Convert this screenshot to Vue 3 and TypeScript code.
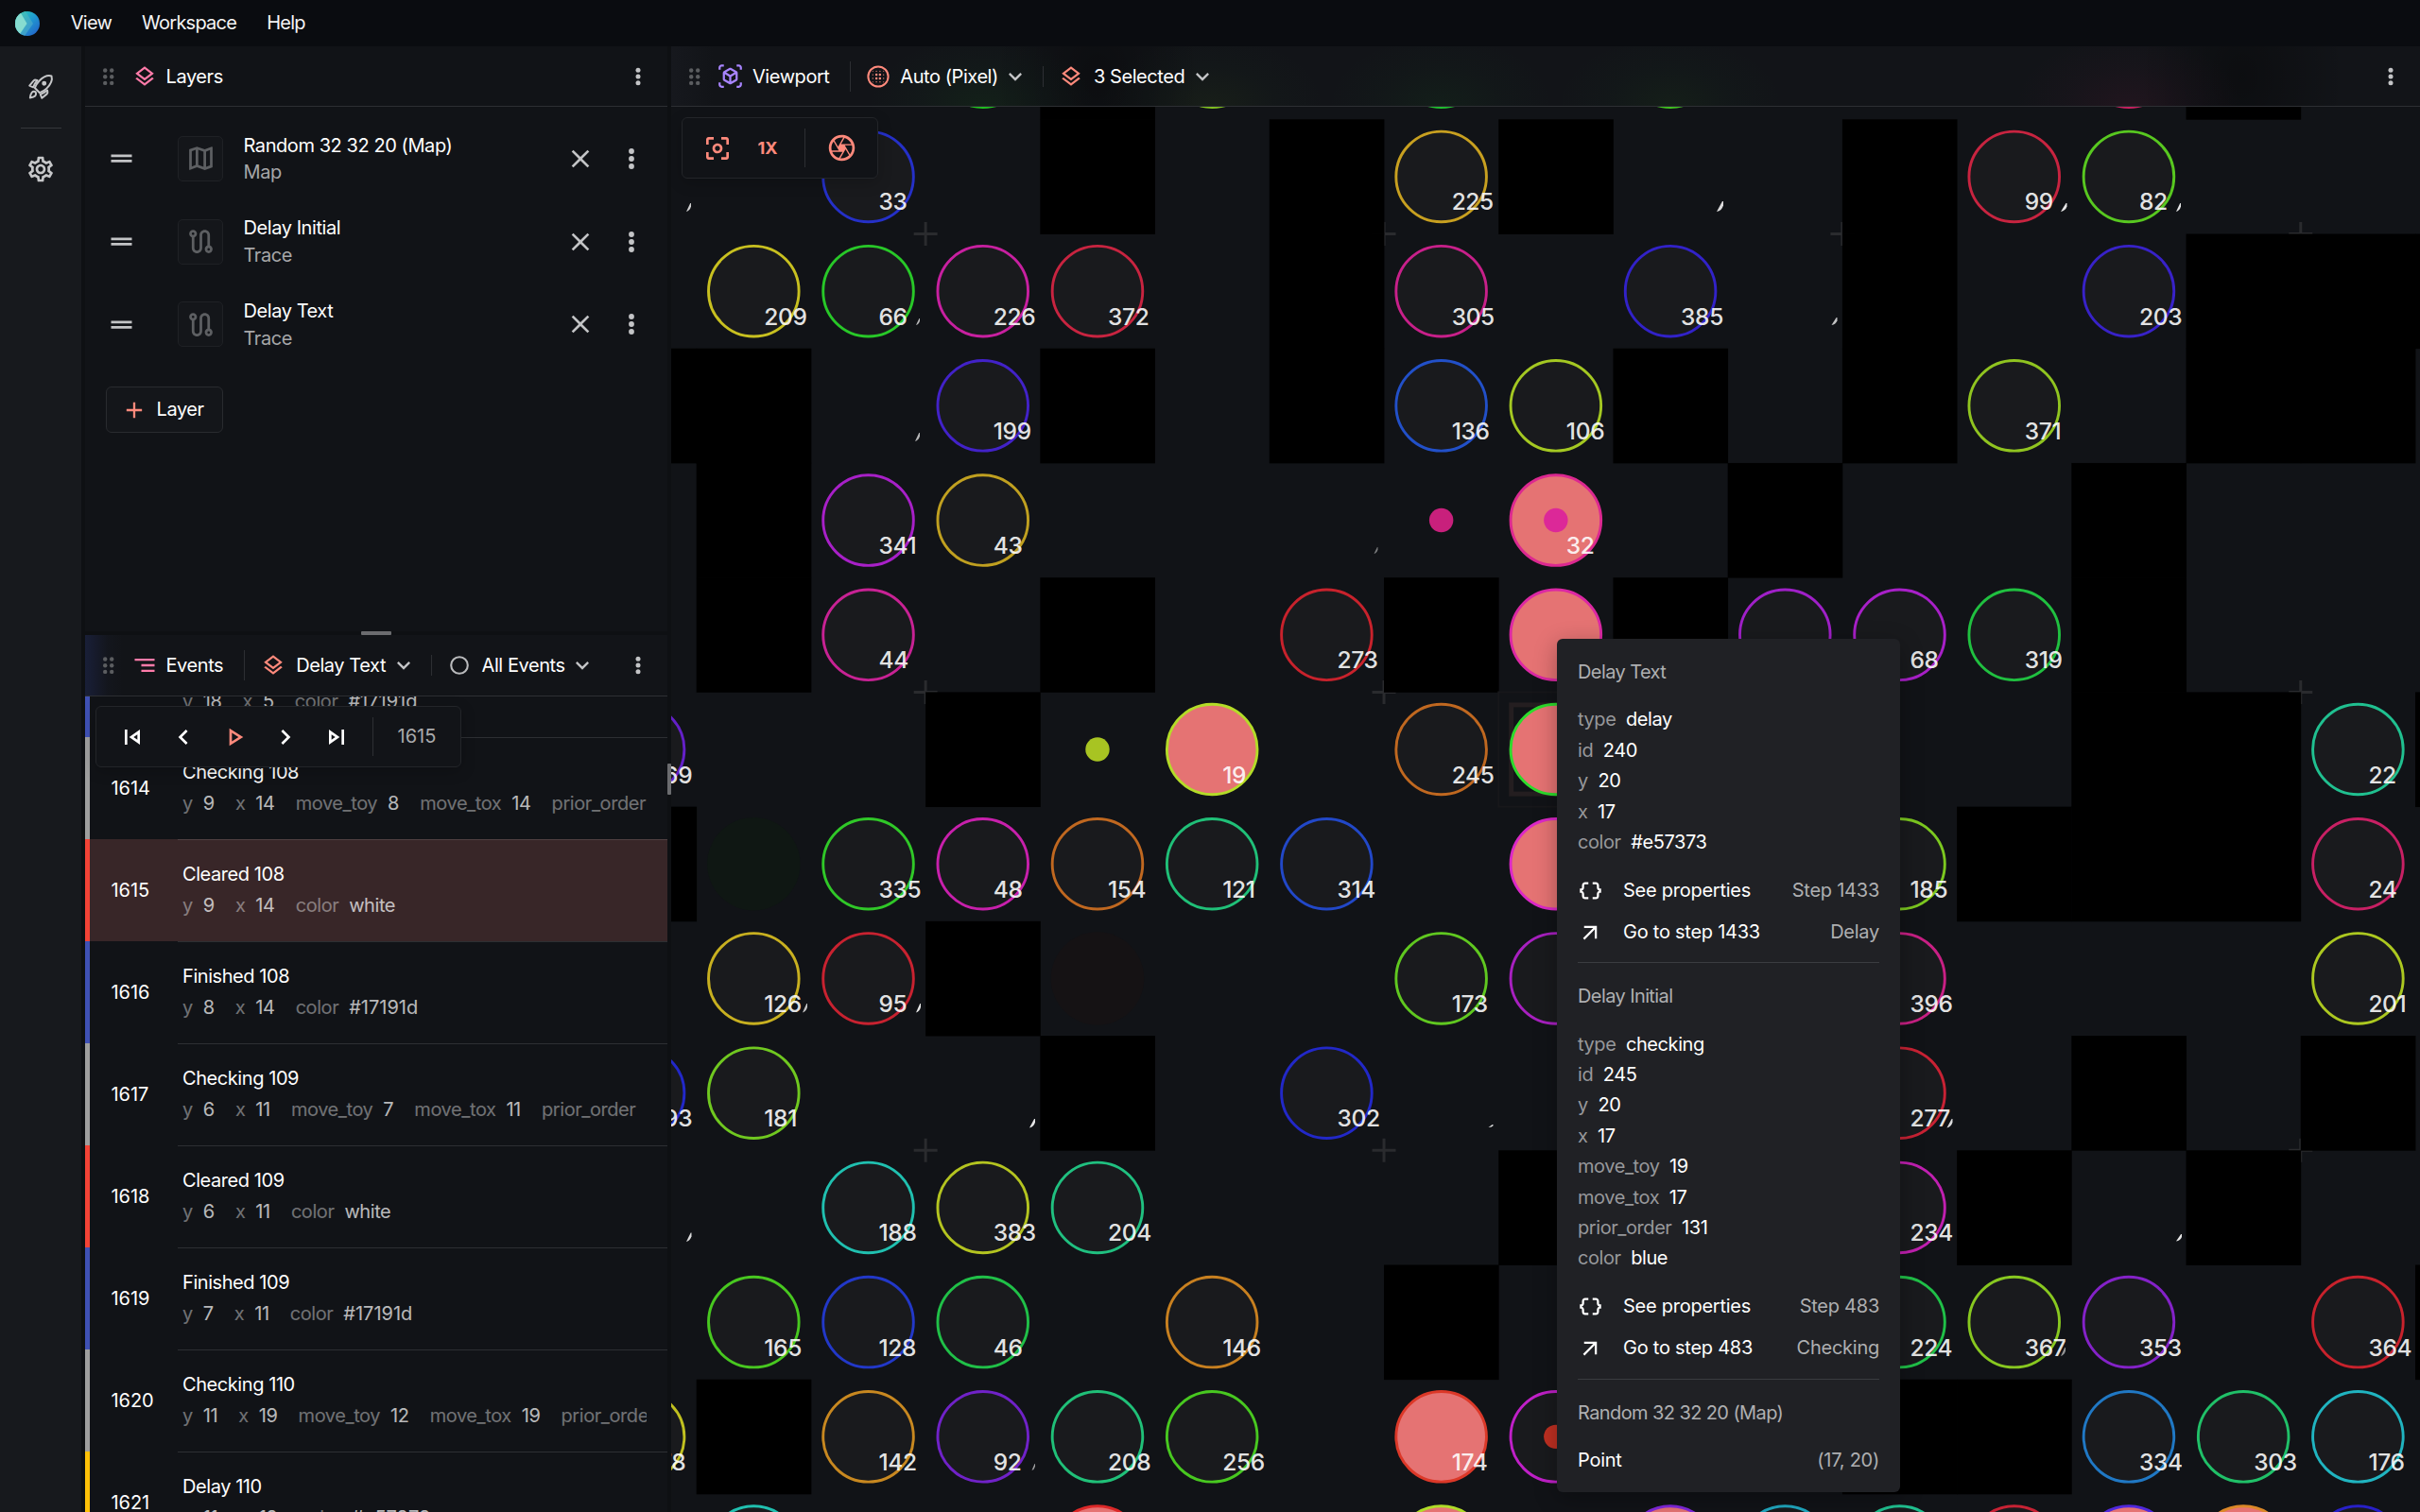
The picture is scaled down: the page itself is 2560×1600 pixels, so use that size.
<script setup lang="ts">
import { defineComponent, h } from 'vue'

const icons: Record<string, string> = {
  layers: 'M11.99 18.54l-7.37-5.73L3 14.07l9 7 9-7-1.63-1.27-7.38 5.74zM12 16l7.36-5.73L21 9l-9-7-9 7 1.63 1.27L12 16zm0-11.47L17.74 9 12 13.47 6.26 9 12 4.53z',
  gear: 'M19.43 12.98c.04-.32.07-.64.07-.98 0-.34-.03-.66-.07-.98l2.11-1.65c.19-.15.24-.42.12-.64l-2-3.46c-.09-.16-.26-.25-.44-.25-.06 0-.12.01-.17.03l-2.49 1c-.52-.4-1.08-.73-1.69-.98l-.38-2.65C14.46 2.18 14.25 2 14 2h-4c-.25 0-.46.18-.49.42l-.38 2.65c-.61.25-1.17.59-1.69.98l-2.49-1c-.06-.02-.12-.03-.18-.03-.17 0-.34.09-.43.25l-2 3.46c-.13.22-.07.49.12.64l2.11 1.65c-.04.32-.07.65-.07.98 0 .33.03.66.07.98l-2.11 1.65c-.19.15-.24.42-.12.64l2 3.46c.09.16.26.25.44.25.06 0 .12-.01.17-.03l2.49-1c.52.4 1.08.73 1.69.98l.38 2.65c.03.24.24.42.49.42h4c.25 0 .46-.18.49-.42l.38-2.65c.61-.25 1.17-.59 1.69-.98l2.49 1c.06.02.12.03.18.03.17 0 .34-.09.43-.25l2-3.46c.12-.22.07-.49-.12-.64l-2.11-1.65zm-1.98-1.71c.04.31.05.52.05.73 0 .21-.02.43-.05.73l-.14 1.13.89.7 1.08.84-.7 1.21-1.27-.51-1.04-.42-.9.68c-.43.32-.84.56-1.25.73l-1.06.43-.16 1.13-.2 1.35h-1.4l-.19-1.35-.16-1.13-1.06-.43c-.43-.18-.83-.41-1.23-.71l-.91-.7-1.06.43-1.27.51-.7-1.21 1.08-.84.89-.7-.14-1.13c-.03-.31-.05-.54-.05-.74s.02-.43.05-.73l.14-1.13-.89-.7-1.08-.84.7-1.21 1.27.51 1.04.42.9-.68c.43-.32.84-.56 1.25-.73l1.06-.43.16-1.13.2-1.35h1.39l.19 1.35.16 1.13 1.06.43c.43.18.83.41 1.23.71l.91.7 1.06-.43 1.27-.51.7 1.21-1.07.85-.89.7.14 1.13zM12 8c-2.21 0-4 1.79-4 4s1.79 4 4 4 4-1.79 4-4-1.79-4-4-4zm0 6c-1.1 0-2-.9-2-2s.9-2 2-2 2 .9 2 2-.9 2-2 2z',
  map: 'M20.5 3l-.16.03L15 5.1 9 3 3.36 4.9c-.21.07-.36.25-.36.48V20.5c0 .28.22.5.5.5l.16-.03L9 18.9l6 2.1 5.64-1.9c.21-.07.36-.25.36-.48V3.5c0-.28-.22-.5-.5-.5zM10 5.47l4 1.4v11.66l-4-1.4V5.47zm-5 .99l3-1.01v11.7l-3 1.16V6.46zm14 11.08l-3 1.01V6.86l3-1.16v11.84z',
  route: 'M19 15.18V7c0-2.21-1.79-4-4-4s-4 1.79-4 4v10c0 1.1-.9 2-2 2s-2-.9-2-2V8.82C8.16 8.4 9 7.3 9 6c0-1.66-1.34-3-3-3S3 4.34 3 6c0 1.3.84 2.4 2 2.82V17c0 2.21 1.79 4 4 4s4-1.79 4-4V7c0-1.1.9-2 2-2s2 .9 2 2v8.18c-1.16.41-2 1.51-2 2.82 0 1.66 1.34 3 3 3s3-1.34 3-3c0-1.3-.84-2.4-2-2.82zM6 7c-.55 0-1-.45-1-1s.45-1 1-1 1 .45 1 1-.45 1-1 1zm12 12c-.55 0-1-.45-1-1s.45-1 1-1 1 .45 1 1-.45 1-1 1z',
  close: 'M19 6.41L17.59 5 12 10.59 6.41 5 5 6.41 10.59 12 5 17.59 6.41 19 12 13.41 17.59 19 19 17.59 13.41 12z',
  handle: 'M20 9H4v2h16V9zM4 15h16v-2H4v2z',
  add: 'M19 13h-6v6h-2v-6H5v-2h6V5h2v6h6v2z',
  segment: 'M9 18h12v-2H9v2zM3 6v2h18V6H3zm6 7h12v-2H9v2z',
  expand: 'M16.59 8.59L12 13.17 7.41 8.59 6 10l6 6 6-6z',
  first: 'M6 6h2v12H6zm3.5 6l8.5 6V6l-8.5 6zm6.5 2.14L12.97 12 16 9.86v4.28z',
  prev: 'M15.41 7.41L14 6l-6 6 6 6 1.41-1.41L10.83 12z',
  play: 'M10 8.64L15.27 12 10 15.36V8.64M8 5v14l11-7L8 5z',
  next: 'M10 6L8.59 7.41 13.17 12l-4.58 4.59L10 18l6-6z',
  last: 'M6 18l8.5-6L6 6v12zm2-8.14L11.03 12 8 14.14V9.86zM16 6h2v12h-2z',
  cube: 'M3 4c0-.55.45-1 1-1h2V1H4C2.34 1 1 2.34 1 4v2h2V4zM3 20v-2H1v2c0 1.66 1.34 3 3 3h2v-2H4c-.55 0-1-.45-1-1zM20 1h-2v2h2c.55 0 1 .45 1 1v2h2V4c0-1.66-1.34-3-3-3zM21 20c0 .55-.45 1-1 1h-2v2h2c1.66 0 3-1.34 3-3v-2h-2v2zM19 14.87V9.13c0-.72-.38-1.38-1-1.73l-5-2.88c-.31-.18-.65-.27-1-.27s-.69.09-1 .27L6 7.39c-.62.36-1 1.02-1 1.74v5.74c0 .72.38 1.38 1 1.73l5 2.88c.31.18.65.27 1 .27s.69-.09 1-.27l5-2.88c.62-.35 1-1.01 1-1.73zm-8 2.3l-4-2.3v-4.63l4 2.33v4.6zm1-6.33L8.04 8.53 12 6.25l3.96 2.28L12 10.84zm5 4.03l-4 2.3v-4.6l4-2.33v4.63z',
  focus: 'M12 8c-2.21 0-4 1.79-4 4s1.79 4 4 4 4-1.79 4-4-1.79-4-4-4zm0 6c-1.1 0-2-.9-2-2s.9-2 2-2 2 .9 2 2-.9 2-2 2zM5 15H3v4c0 1.1.9 2 2 2h4v-2H5v-4zM5 5h4V3H5c-1.1 0-2 .9-2 2v4h2V5zM19 3h-4v2h4v4h2V5c0-1.1-.9-2-2-2zM19 19h-4v2h4c1.1 0 2-.9 2-2v-4h-2v4z',
  camera: 'M14.25 2.26l-.08-.04-.01.02C13.46 2.09 12.74 2 12 2 6.48 2 2 6.48 2 12s4.48 10 10 10 10-4.48 10-10c0-4.75-3.31-8.72-7.75-9.74zM19.41 9h-7.99l2.71-4.7c2.4.66 4.35 2.42 5.28 4.7zM13.1 4.08L10.27 9l-1.15 2L6.4 6.3C7.84 4.88 9.82 4 12 4c.37 0 .74.03 1.1.08zM5.7 7.09L8.54 12l1.15 2H4.26C4.1 13.36 4 12.69 4 12c0-1.85.64-3.55 1.7-4.91zM4.59 15h7.98l-2.71 4.7c-2.4-.67-4.34-2.42-5.27-4.7zm6.31 4.91L14.89 13l2.72 4.7C16.16 19.12 14.18 20 12 20c-.38 0-.74-.04-1.1-.09zm7.4-3l-4-6.91h5.43c.17.64.27 1.31.27 2 0 1.85-.64 3.55-1.7 4.91z',
  braces: 'M4 7v2c0 .55-.45 1-1 1H2v4h1c.55 0 1 .45 1 1v2c0 1.65 1.35 3 3 3h3v-2H7c-.55 0-1-.45-1-1v-2c0-1.3-.84-2.42-2-2.83v-.34C5.16 11.42 6 10.3 6 9V7c0-.55.45-1 1-1h3V4H7C5.35 4 4 5.35 4 7zM21 10c-.55 0-1-.45-1-1V7c0-1.65-1.35-3-3-3h-3v2h3c.55 0 1 .45 1 1v2c0 1.3.84 2.42 2 2.83v.34c-1.16.41-2 1.52-2 2.83v2c0 .55-.45 1-1 1h-3v2h3c1.65 0 3-1.35 3-3v-2c0-.55.45-1 1-1h1v-4h-1z',
  outward: 'M6 6v2h8.59L5 17.59 6.41 19 16 9.41V18h2V6z',
}

// Renders a 24-unit glyph at the requested pixel size.
const Icon = defineComponent({
  props: { name: { type: String, required: true }, size: { type: Number, default: 28 } },
  setup(props) {
    return () =>
      h('svg', { viewBox: '0 0 24 24', width: props.size, height: props.size, style: 'display:block;flex:none' }, [
        h('path', { d: icons[props.name], fill: 'currentColor' }),
      ])
  },
})

// Vertical three-dot menu button.
const Kebab = defineComponent({
  props: { r: { type: Number, default: 2.5 }, gap: { type: Number, default: 6.7 } },
  setup(props) {
    return () =>
      h(
        'svg',
        { viewBox: '0 0 28 28', width: 28, height: 28, style: 'display:block;flex:none' },
        [-1, 0, 1].map((k) => h('circle', { cx: 14, cy: 14 + k * props.gap, r: props.r, fill: '#c3c4c6' })),
      )
  },
})

// Six-dot grip at the left of every panel header.
const Grip = defineComponent({
  setup() {
    return () =>
      h(
        'svg',
        { viewBox: '0 0 12 20', width: 12, height: 20, style: 'display:block;flex:none' },
        [0, 1, 2, 3, 4, 5].map((k) =>
          h('circle', { cx: 2.2 + (k % 2) * 7, cy: 3.5 + Math.floor(k / 2) * 6.7, r: 2.2, fill: '#5b5d60' }),
        ),
      )
  },
})

const layers = [
  { name: 'Random 32 32 20 (Map)', kind: 'Map', icon: 'map' },
  { name: 'Delay Initial', kind: 'Trace', icon: 'route' },
  { name: 'Delay Text', kind: 'Trace', icon: 'route' },
]

type Prop = [string, string]
interface EventRow { step?: number; title?: string; color: string; props: Prop[]; active?: boolean }
const BLUE = '#3f51b5', GREY = '#9e9e9e', RED = '#f44336', AMBER = '#ffc107'
const events: EventRow[] = [
  { color: BLUE, props: [['y', '18'], ['x', '5'], ['color', '#17191d']] },
  { step: 1614, title: 'Checking 108', color: GREY, props: [['y', '9'], ['x', '14'], ['move_toy', '8'], ['move_tox', '14'], ['prior_order', '']] },
  { step: 1615, title: 'Cleared 108', color: RED, active: true, props: [['y', '9'], ['x', '14'], ['color', 'white']] },
  { step: 1616, title: 'Finished 108', color: BLUE, props: [['y', '8'], ['x', '14'], ['color', '#17191d']] },
  { step: 1617, title: 'Checking 109', color: GREY, props: [['y', '6'], ['x', '11'], ['move_toy', '7'], ['move_tox', '11'], ['prior_order', '']] },
  { step: 1618, title: 'Cleared 109', color: RED, props: [['y', '6'], ['x', '11'], ['color', 'white']] },
  { step: 1619, title: 'Finished 109', color: BLUE, props: [['y', '7'], ['x', '11'], ['color', '#17191d']] },
  { step: 1620, title: 'Checking 110', color: GREY, props: [['y', '11'], ['x', '19'], ['move_toy', '12'], ['move_tox', '19'], ['prior_order', '']] },
  { step: 1621, title: 'Delay 110', color: AMBER, props: [['y', '11'], ['x', '19'], ['color', '#e57373']] },
]

// Map canvas: square cells of CELL px whose (0, 0) corner is at (X0, Y0) inside the viewport.
const CELL = 121.22, X0 = 26.7, Y0 = 77.3
const left = (c: number) => X0 + c * CELL
const top = (r: number) => Y0 + r * CELL
const cx = (c: number) => left(c) + CELL / 2
const cy = (r: number) => top(r) + CELL / 2

const walls: Record<number, number[]> = {
  [-1]: [3, 13],
  0: [3, 5, 7, 10],
  1: [5, 10, 13, 14, 15],
  2: [-1, 0, 3, 5, 8, 10, 13, 14],
  3: [0, 9, 12],
  4: [0, 3, 6, 8, 12],
  5: [2, 12, 13, 15],
  6: [-1, 11, 12, 13],
  7: [2],
  8: [3, 12, 14],
  9: [7, 11, 13],
  10: [6, 15],
  11: [0, 10, 11],
}
const wallCells = Object.entries(walls).flatMap(([r, cs]) => cs.map((c) => ({ r: +r, c })))
const crosses = [2, 6, 10, 14].flatMap((c) => [1, 5, 9].map((r) => ({ c, r })))

type Node = [number, number, string, string, boolean?]
const nodes: Node[] = [
  [2, -1, '', '#20c020'], [4, -1, '', '#80c020'], [6, -1, '', '#20c030'], [8, -1, '', '#40c020'], [12, -1, '', '#c82060'],
  [1, 0, '33', '#2530c8'], [6, 0, '225', '#c8a020'], [11, 0, '99', '#c82440'], [12, 0, '82', '#58c820'],
  [0, 1, '209', '#c8c020'], [1, 1, '66', '#28c828'], [2, 1, '226', '#c820a0'], [3, 1, '372', '#c82440'], [6, 1, '305', '#c8208a'], [8, 1, '385', '#3222c8'], [12, 1, '203', '#3822c8'],
  [2, 2, '199', '#4222c8'], [6, 2, '136', '#2250c8'], [7, 2, '106', '#a4c822'], [11, 2, '371', '#90c420'],
  [1, 3, '341', '#a820c8'], [2, 3, '43', '#c0a020'], [7, 3, '32', '#dc2890', true],
  [1, 4, '44', '#c82294'], [5, 4, '273', '#c8222c'], [7, 4, '', '#dc28a4', true], [9, 4, '', '#a020c8'], [10, 4, '68', '#a820c8'], [11, 4, '319', '#20c040'],
  [-1, 5, '369', '#6420c8'], [4, 5, '19', '#b4dc28', true], [6, 5, '245', '#c06820'], [7, 5, '', '#2cdc2c', true], [14, 5, '22', '#20c090'],
  [1, 6, '335', '#30c828'], [2, 6, '48', '#c820ac'], [3, 6, '154', '#c06820'], [4, 6, '121', '#20c078'], [5, 6, '314', '#2248c8'], [7, 6, '', '#dc28c8', true], [10, 6, '185', '#7cc820'], [14, 6, '24', '#c82064'],
  [0, 7, '126', '#c8b020'], [1, 7, '95', '#c82230'], [6, 7, '173', '#60c820'], [7, 7, '', '#a820c0'], [10, 7, '396', '#c82084'], [14, 7, '201', '#acc820'],
  [-1, 8, '393', '#2228c8'], [0, 8, '181', '#70c820'], [5, 8, '302', '#2228c8'], [10, 8, '277', '#c82234'],
  [1, 9, '188', '#20c0b0'], [2, 9, '383', '#b4c420'], [3, 9, '204', '#20c080'], [10, 9, '234', '#c020b0'],
  [0, 10, '165', '#48c820'], [1, 10, '128', '#2238c8'], [2, 10, '46', '#20c048'], [4, 10, '146', '#c88020'], [10, 10, '224', '#20c048'], [11, 10, '367', '#88c820'], [12, 10, '353', '#8422c8'], [14, 10, '364', '#c8222c'],
  [-1, 11, '178', '#c0c020'], [1, 11, '142', '#c88820'], [2, 11, '92', '#7022c8'], [3, 11, '208', '#20c078'], [4, 11, '256', '#48c820'], [6, 11, '174', '#dc3828', true], [7, 11, '', '#c020c8'], [12, 11, '334', '#2078c4'], [13, 11, '303', '#20c068'], [14, 11, '176', '#20b4c0'],
  [0, 12, '', '#20c0b0'], [3, 12, '', '#dc2828', true], [6, 12, '', '#b0dc28', true], [8, 12, '', '#8028dc', true], [9, 12, '', '#20a8c0'], [10, 12, '', '#20c090'], [11, 12, '', '#c82234'], [12, 12, '', '#5028dc', true], [13, 12, '', '#dc8828', true], [14, 12, '', '#2820c8'],
]
const dots: [number, number, string][] = [
  [6, 3, '#c8207c'], [7, 3, '#dc2898'], [3, 5, '#a8c422'], [7, 11, '#c03022'],
]
const ghosts: [number, number, string][] = [[0, 6, '#0f1713'], [3, 7, '#151214']]

// Remainders of labels hidden beneath neighbouring tiles: x, y, width, height, opacity.
const ticks: [number, number, number, number, number][] = [
  [726, 215, 5, 9, 0.8], [969, 337, 4, 7, 0.7], [1816, 213, 7, 11, 0.85], [1937.5, 336, 6, 8, 0.75],
  [2180, 215, 6.5, 9, 0.9], [2302, 215, 5, 9, 0.9], [968, 458, 5, 9, 0.7], [1453.5, 579, 4, 7, 0.45],
  [849, 1062, 5, 9.5, 0.75], [969, 1062, 5, 9.5, 0.9], [1089, 1184, 6, 9.5, 0.9], [726, 1304.5, 5.5, 9.5, 0.85],
  [1091.5, 1549, 3.5, 7, 0.6], [1574.5, 1190, 5, 3, 0.9], [2059.5, 1184, 6, 9.5, 0.85], [2302, 1306, 6, 7.5, 0.9],
  [2180, 1426, 5, 9, 0.55],
]
const tickPath = ([x, y, w, k]: number[]) => {
  const l = x - 710, t = y - 49
  return `M${l} ${t + k}L${l + w * 0.85} ${t}H${l + w}V${t + k * 0.4}Q${l + w * 0.75} ${t + k * 0.9} ${l} ${t + k}Z`
}

const tips = [
  { title: 'Delay Text', props: [['type', 'delay'], ['id', '240'], ['y', '20'], ['x', '17'], ['color', '#e57373']], step: 1433, kind: 'Delay' },
  {
    title: 'Delay Initial',
    props: [['type', 'checking'], ['id', '245'], ['y', '20'], ['x', '17'], ['move_toy', '19'], ['move_tox', '17'], ['prior_order', '131'], ['color', 'blue']],
    step: 483, kind: 'Checking',
  },
]
const blurDots = [-1, 0, 1, 2].flatMap((i) => [-1, 0, 1, 2].map((j) => {
  const edge = i === -1 || i === 2 || j === -1 || j === 2
  const corner = (i === -1 || i === 2) && (j === -1 || j === 2)
  return { x: 11.1 + i * 3.8, y: 11.1 + j * 3.8, r: corner ? 0.5 : edge ? 0.65 : 1.25 }
}))
</script>

<template>
  <div class="app">
    <nav class="menubar">
      <svg class="logo" viewBox="0 0 26 26" width="26" height="26">
        <defs>
          <linearGradient id="lg" x1="0" y1="0" x2="1" y2="1">
            <stop offset="0" stop-color="#2fd3b0" /><stop offset=".5" stop-color="#1f9ad0" /><stop offset="1" stop-color="#2458c8" />
          </linearGradient>
          <linearGradient id="lg2" x1="0" y1="0" x2="1" y2="1">
            <stop offset="0" stop-color="#3fcdb0" /><stop offset="1" stop-color="#3d8fd6" />
          </linearGradient>
          <clipPath id="lc"><circle cx="13" cy="13" r="13" /></clipPath>
        </defs>
        <g clip-path="url(#lc)">
          <rect width="26" height="26" fill="url(#lg)" />
          <path d="M0 0H11L19 13L10 26H0Z" fill="url(#lg2)" />
          <path d="M0 0H5L12.500 13L5 24H0Z" fill="#86dcd0" />
        </g>
      </svg>
      <span>View</span><span>Workspace</span><span>Help</span>
    </nav>

    <div class="body">
      <aside class="rail">
        <svg viewBox="0 0 24 24" width="32" height="32">
          <g transform="translate(12 12) scale(.93) translate(-12 -12)" fill="none" stroke="currentColor" stroke-width="1.600" stroke-linejoin="round">
            <path d="M9.190 6.350C7.150 8.640 5.750 11.930 5.620 12.240L2.500 10.900L6.050 6.640C6.520 6.170 7.200 5.960 7.860 6.090Z" />
            <path d="M11.170 17s3.740-1.550 5.890-3.700c5.400-5.400 4.500-9.620 4.210-10.570-.95-.3-5.170-1.190-10.570 4.210C8.550 9.090 7 12.830 7 12.830Z" />
            <path d="M17.650 14.810c-2.290 2.040-5.580 3.440-5.890 3.570L13.100 21.500l4.260-3.550c.47-.47.68-1.150.55-1.810Z" />
            <path d="M8 17.800c0 .83-.2 1.300-.7 1.800C6.200 20.700 3 21.200 3 21.200s.5-3.400 1.500-4.500c.5-.5 1-.8 1.700-.8 1 0 1.800.9 1.800 1.900Z" />
            <circle cx="15" cy="9" r="1.200" fill="currentColor" />
          </g>
        </svg>
        <i class="rail-line" />
        <Icon name="gear" :size="32" />
      </aside>

      <div class="side">
        <section class="panel layers">
          <header class="head">
            <Grip />
            <Icon class="lead pink" name="layers" :size="26" />
            <span class="title">Layers</span>
            <Kebab class="end" />
          </header>
          <div class="layer-list">
            <div v-for="l in layers" :key="l.name" class="layer">
              <Icon name="handle" :size="33" />
              <div class="thumb"><Icon :name="l.icon" :size="33" /></div>
              <div class="layer-text"><div>{{ l.name }}</div><div class="dim">{{ l.kind }}</div></div>
              <Icon class="x" name="close" :size="32" />
              <Kebab :r="2.9" :gap="8" />
            </div>
            <button class="add"><Icon class="coral" name="add" :size="28" /><span>Layer</span></button>
          </div>
        </section>

        <div class="split"><i /></div>

        <section class="panel events">
          <div class="list">
            <div v-for="(e, i) in events" :key="i" class="row" :class="{ active: e.active }">
              <i class="strip" :style="{ background: e.color }" />
              <span class="step">{{ e.step }}</span>
              <div class="row-body">
                <div class="row-title">{{ e.title }}</div>
                <div class="props">
                  <span v-for="p in e.props" :key="p[0]" class="prop"><em>{{ p[0] }}</em><b :class="{ hex: p[1][0] === '#' }">{{ p[1] }}</b></span>
                </div>
              </div>
            </div>
          </div>
          <header class="head over events-head">
            <Grip />
            <Icon class="lead seg pink" name="segment" :size="28" />
            <span class="title">Events</span>
            <i class="rule tall" />
            <Icon class="coral sel-icon" name="layers" :size="26" />
            <span class="sel">Delay Text</span>
            <Icon class="chev" name="expand" :size="28" />
            <i class="rule short" />
            <svg class="sel-icon ring" viewBox="0 0 26 26" width="26" height="26"><circle cx="13" cy="13" r="8.800" fill="none" stroke="currentColor" stroke-width="2.100" /></svg>
            <span class="sel">All Events</span>
            <Icon class="chev" name="expand" :size="28" />
            <Kebab class="end" />
          </header>
          <div class="player">
            <Icon name="first" :size="32" />
            <Icon name="prev" :size="32" />
            <Icon class="coral" name="play" :size="32" />
            <Icon name="next" :size="32" />
            <Icon name="last" :size="32" />
            <i class="bar" />
            <span>1615</span>
          </div>
        </section>
      </div>

      <div class="vsplit"><i /></div>

      <main class="viewport">
        <svg class="canvas" width="1850" height="1551" viewBox="0 0 1850 1551">
          <g stroke="#2a2b2e" stroke-width="3">
            <path v-for="(k, i) in crosses" :key="i" :d="`M${left(k.c) - 12.5} ${top(k.r)}h25M${left(k.c)} ${top(k.r) - 12.5}v25`" />
          </g>
          <rect v-for="(w, i) in wallCells" :key="'w' + i" :x="left(w.c)" :y="top(w.r)" :width="CELL + 0.4" :height="CELL + 0.4" fill="#000" />
          <circle v-for="(g, i) in ghosts" :key="'g' + i" :cx="cx(g[0])" :cy="cy(g[1])" r="49.200" :fill="g[2]" />
          <g fill="none">
            <rect :x="left(7)" :y="top(5)" :width="CELL" :height="CELL" stroke="#17171a" stroke-width="2" />
            <rect :x="left(7) + 13.500" :y="top(5) + 13.500" :width="CELL - 27" :height="CELL - 27" stroke="#241e20" stroke-width="5" />
          </g>
          <circle
            v-for="(n, i) in nodes" :key="'n' + i"
            :cx="cx(n[0])" :cy="cy(n[1])" r="47.800" :fill="n[4] ? '#e57373' : '#191a1d'" :stroke="n[3]" stroke-width="2.900"
          />
          <circle v-for="(d, i) in dots" :key="'d' + i" :cx="cx(d[0])" :cy="cy(d[1])" r="12.700" :fill="d[2]" />
          <g class="labels">
            <template v-for="(n, i) in nodes" :key="'t' + i">
              <text v-if="n[2]" :x="cx(n[0]) + 11" :y="cy(n[1]) + 35.500">{{ n[2] }}</text>
            </template>
          </g>
          <path v-for="(t, i) in ticks" :key="'k' + i" :d="tickPath(t)" fill="#fff" :opacity="t[4]" />
        </svg>

        <header class="head over viewport-head">
          <Grip />
          <Icon class="lead cube purple" name="cube" :size="27" />
          <span class="title">Viewport</span>
          <i class="rule tall" />
          <svg class="sel-icon coral" viewBox="0 0 26 26" width="26" height="26">
            <circle cx="13" cy="13" r="10.600" fill="none" stroke="currentColor" stroke-width="2" />
            <circle v-for="(d, i) in blurDots" :key="i" :cx="d.x" :cy="d.y" :r="d.r" fill="currentColor" />
          </svg>
          <span class="sel">Auto (Pixel)</span>
          <Icon class="chev" name="expand" :size="28" />
          <i class="rule short" />
          <Icon class="coral sel-icon" name="layers" :size="26" />
          <span class="sel">3 Selected</span>
          <Icon class="chev" name="expand" :size="28" />
          <Kebab class="end" />
        </header>

        <div class="tools coral">
          <Icon name="focus" :size="32" />
          <strong>1X</strong>
          <i class="bar" />
          <Icon name="camera" :size="33" />
        </div>

        <div class="tip">
          <div v-for="t in tips" :key="t.title" class="tip-part">
            <h4>{{ t.title }}</h4>
            <div class="kv">
              <div v-for="p in t.props" :key="p[0]"><em>{{ p[0] }}</em><b>{{ p[1] }}</b></div>
            </div>
            <div class="act"><Icon name="braces" :size="27" /><span>See properties</span><small>Step {{ t.step }}</small></div>
            <div class="act"><Icon name="outward" :size="27" /><span>Go to step {{ t.step }}</span><small>{{ t.kind }}</small></div>
          </div>
          <div class="tip-part">
            <h4>Random 32 32 20 (Map)</h4>
            <div class="act point"><span>Point</span><small>(17, 20)</small></div>
          </div>
        </div>
      </main>
    </div>
  </div>
</template>

<style>
body { background: #0a0c10; overflow: hidden; }
</style>

<style scoped>
.app {
  width: 2560px; height: 1600px; display: flex; flex-direction: column; overflow: hidden;
  background: #0a0c10; color: #fff; font: 400 20px/28.600px Inter, "Liberation Sans", sans-serif; letter-spacing: -.43px;
}
i { display: block; flex: none; }
em, b { font-style: normal; font-weight: 400; }
.menubar { height: 49px; flex: none; display: flex; align-items: center; gap: 32px; padding-left: 16px; letter-spacing: -.75px; }
.menubar span { color: #f4f4f5; }
.menubar .logo { margin-right: .8px; }
.body { flex: 1; display: flex; min-height: 0; }
.rail { width: 86px; flex: none; background: #17191d; display: flex; flex-direction: column; align-items: center; padding-top: 27px; color: #c6c7c9; border-right: 4px solid #0e1013; }
.rail-line { width: 43px; height: 1px; background: #35373b; margin: 27px 0; }
.side { width: 616px; flex: none; display: flex; flex-direction: column; background: #111317; }
.panel { position: relative; }
.layers { height: 619px; flex: none; }
.head { height: 63px; box-sizing: content-box; border-bottom: 1px solid #2d2f33; display: flex; align-items: center; padding-left: 19px; padding-right: 16.700px; }
.head.over { position: absolute; inset: 0 0 auto 0; background-color: #121418; }
.events-head { height: 64px; background-image: linear-gradient(90deg, #191f38 0, #161a2a 12px, rgba(20, 23, 32, .6) 24px, rgba(18, 20, 24, 0) 40px); }
.viewport-head {
  background-image:
    radial-gradient(120px 75px at 329px 100%, rgba(32, 192, 32, .07), rgba(32, 160, 64, .03) 55%, transparent),
    radial-gradient(120px 75px at 572px 100%, rgba(120, 192, 32, .06), rgba(64, 160, 64, .025) 55%, transparent),
    radial-gradient(120px 75px at 814px 100%, rgba(32, 192, 48, .06), rgba(32, 160, 64, .025) 55%, transparent),
    radial-gradient(120px 75px at 1057px 100%, rgba(64, 192, 32, .06), rgba(32, 160, 64, .025) 55%, transparent),
    radial-gradient(120px 75px at 1542px 100%, rgba(200, 32, 96, .08), rgba(160, 32, 96, .035) 55%, transparent),
    radial-gradient(110px 160px at 451px 50%, rgba(0, 0, 0, .32), transparent),
    radial-gradient(110px 160px at 1662px 50%, rgba(0, 0, 0, .32), transparent),
    linear-gradient(90deg, rgba(24, 26, 32, .7), transparent 45px);
}
.title, .sel { padding-top: 1px; }
.lead { margin: 0 10px 0 18.500px; }
.lead.seg { margin: 0 9px 0 17.500px; }
.lead.cube { margin: 0 10.300px 0 17.700px; }
.title { margin-right: 22px; }
.viewport-head .title { margin-right: 21.300px; }
.viewport-head .rule.short { margin-left: 15px; }
.viewport-head .sel-icon { margin: 0 10.500px 0 16px; }
.end { margin-left: auto; }
.pink { color: #ff7ba9; }
.coral { color: #ff8a7c; }
.purple { color: #a884ff; }
.rule { width: 1px; background: #2d2f33; }
.rule.tall { height: 32px; }
.rule.short { height: 22px; margin-left: 15.500px; }
.sel-icon { margin: 0 11px 0 17px; flex: none; }
.ring { color: #b9babc; margin: 0 10.500px 0 16px; }
.chev { margin-left: 4.500px; color: #c3c4c6; }
.layer-list { padding: 11px 24px 0 22px; }
.layer { height: 87.700px; display: flex; align-items: center; color: #c3c4c6; }
.thumb { width: 46px; height: 46px; border: 1px solid #1f2125; border-radius: 5px; background: #14161a; display: flex; align-items: center; justify-content: center; color: #5d5f62; margin: 0 21.500px 0 43px; }
.layer-text { flex: 1; color: #fff; padding-top: 1px; }
.dim { color: #a6a7a9; }
.x { margin-right: 23.900px; }
.add { font: inherit; letter-spacing: inherit; color: #fff; width: 124px; height: 49px; box-sizing: border-box; background: #14161a; border: 1px solid #292b2f; border-radius: 6px; padding: 0 0 0 14.500px; display: flex; align-items: center; gap: 10px; margin-top: 22px; }
.split { height: 4px; flex: none; background: #0e1013; display: flex; justify-content: center; }
.split i { width: 32px; height: 4px; border-radius: 1px; background: #6b6c6f; }
.events { flex: 1; overflow: hidden; }
.row { height: 108px; display: flex; align-items: stretch; }
.row.active { background: #382628; }
.strip { width: 5px; }
.step { width: 93px; box-sizing: border-box; padding: 40px 0 0 22.500px; letter-spacing: -.05px; }
.row-body { flex: 1; min-width: 0; border-top: 1px solid rgba(255, 255, 255, .12); padding: 22px 22px 0 5px; }
.row-title { height: 29px; line-height: 29px; }
.props { display: flex; gap: 22.200px; white-space: nowrap; overflow: hidden; line-height: 29px; margin-top: 4px; }
.prop { display: flex; gap: 10.900px; }
.prop em { color: #fff; opacity: .4; }
.prop b { color: #fff; opacity: .7; }
.prop .hex { letter-spacing: 0; }
.player { position: absolute; left: 11px; top: 75px; width: 363px; height: 63px; box-sizing: content-box; border: 1px solid #232529; border-radius: 6px; background: #121418; box-shadow: 0 4px 16px rgba(0, 0, 0, .2); display: flex; align-items: center; padding-left: 22px; gap: 22.100px; }
.player > * { flex: none; }
.bar { width: 1px; height: 41px; background: #2d2f33; }
.player span { color: #a9aaac; margin-left: 3px; letter-spacing: 0; }
.vsplit { width: 4px; flex: none; background: #0e1013; display: flex; align-items: flex-start; }
.vsplit i { width: 4px; height: 33px; margin-top: 759px; background: #6b6c6f; border-radius: 1px; }
.viewport { position: relative; flex: 1; overflow: hidden; background: #111317; }
.canvas { display: block; }
.labels text { font: 500 24.500px Inter, sans-serif; letter-spacing: -.35px; fill: #fff; fill-opacity: .9; }
.tools { position: absolute; left: 11px; top: 75px; width: 206px; height: 63px; border: 1px solid #232529; border-radius: 6px; background: #111317; box-shadow: 0 4px 16px rgba(0, 0, 0, .2); display: flex; align-items: center; }
.tools > :first-child { margin: 0 26.500px 0 21px; }
.tools strong { font-size: 18px; font-weight: 700; letter-spacing: 0; width: 21px; margin-right: 28.500px; padding-top: 1px; }
.tools .bar { margin-right: 22px; }
.tip { position: absolute; left: 937px; top: 627px; width: 319px; height: 882px; box-sizing: content-box; padding: 21px 21.500px 0 22px; background: #202125; border-radius: 6px; box-shadow: 0 6px 24px rgba(0, 0, 0, .3); }
.tip-part + .tip-part { border-top: 1px solid #3a3c40; padding-top: 21px; margin-top: 10.200px; }
.tip h4 { margin: 0; font: inherit; color: #aeafb1; letter-spacing: -.6px; }
.kv { margin: 19.800px 0 13px; line-height: 32.400px; }
.kv em { color: #97989b; margin-right: 10.600px; }
.act { height: 43.800px; display: flex; align-items: center; letter-spacing: -.25px; }
.act svg + span { margin-left: 21px; }
.act small { font-size: 20px; color: #aeafb1; margin-left: auto; }
.point { margin-top: 14px; }
</style>
